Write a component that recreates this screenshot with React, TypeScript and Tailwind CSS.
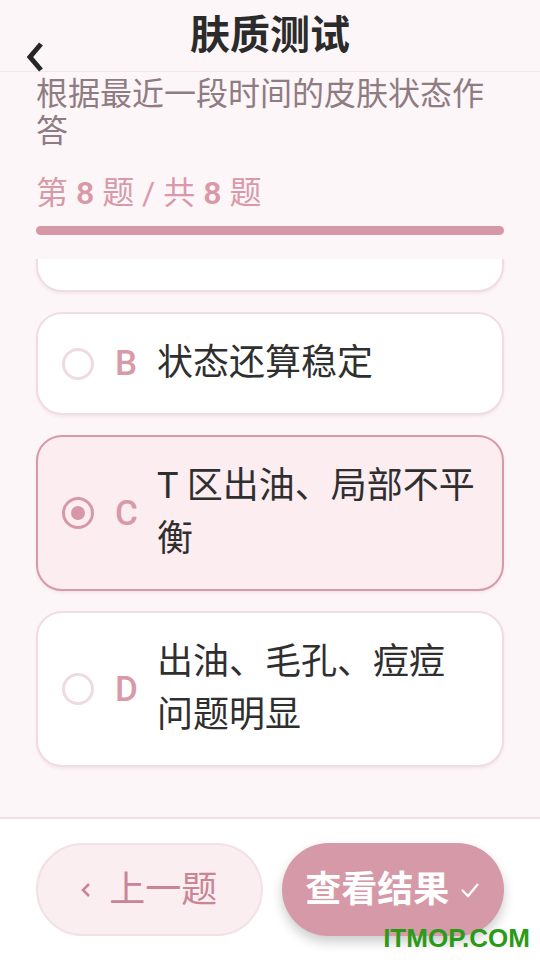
import { useState } from "react";

type Option = {
  key: string;
  text: string;
};

const options: Option[] = [
  { key: "A", text: "整体水润舒适" },
  { key: "B", text: "状态还算稳定" },
  { key: "C", text: "T 区出油、局部不平衡" },
  { key: "D", text: "出油、毛孔、痘痘问题明显" },
];

const App = () => {
  const [selected, setSelected] = useState("C");

  const showOptions = options.map((opt, i) => {
    const active = opt.key === selected;
    return (
      <div
        key={opt.key}
        onClick={() => setSelected(opt.key)}
        className={`flex shrink-0 items-center rounded-[26px] border-2 px-[24px] py-[23px] shadow-[0_2px_3px_rgba(200,150,165,0.15)] ${
          active ? "border-[#d89aa8] bg-[#fbedf0]" : "border-[#f0dde3] bg-white"
        } ${i === 0 ? "-mt-[70px]" : ""}`}
      >
        <div
          className={`flex h-8 w-8 shrink-0 items-center justify-center rounded-full border-[3px] ${
            active ? "border-[#d698a6]" : "border-[#f0dae1]"
          }`}
        >
          {active && <div className="h-[14px] w-[14px] rounded-full bg-[#d698a6]" />}
        </div>
        <span className="ml-[21px] w-[22px] shrink-0 text-[35px] leading-none font-medium text-[#d89aa8]">
          {opt.key}
        </span>
        <p className="ml-[20px] w-[321px] text-[36px] leading-[53px] text-[#2f2f2f]">
          {opt.text}
        </p>
      </div>
    );
  });

  return (
    <div className="relative flex h-[960px] w-[540px] flex-col overflow-hidden bg-[#fdf6f8] font-[Roboto,'Noto_Sans_CJK_SC',sans-serif]">
      <header className="relative flex h-[72px] shrink-0 items-center justify-center border-b border-[#f3e6eb]">
        <svg
          className="absolute left-[26px] top-[42px] h-[30px] w-[18px]"
          viewBox="0 0 18 30"
          fill="none"
        >
          <polyline
            points="15,2 4,15 15,28"
            stroke="#262626"
            strokeWidth="5"
            strokeLinejoin="miter"
          />
        </svg>
        <h1 className="text-[40px] leading-none font-bold text-[#2b2b2b]">肤质测试</h1>
      </header>

      <div className="shrink-0 px-[36px] pt-[4px]">
        <p className="text-[32px] leading-[37px] text-[#8f7c83]">
          根据最近一段时间的皮肤状态作答
        </p>
        <p className="mt-[25px] text-[32px] leading-[36px] text-[#d89aa8]">
          第 <span className="font-semibold">8</span> 题 / 共{" "}
          <span className="font-semibold">8</span> 题
        </p>
        <div className="mt-[15px] h-[9px] rounded-full bg-[#d698a6]" />
      </div>

      <div className="mt-[24px] min-h-0 flex-1 overflow-hidden px-[36px]">
        <div className="flex flex-col gap-5">{showOptions}</div>
      </div>

      <div className="flex h-[143px] shrink-0 items-center gap-[19px] border-t-2 border-[#f2dfe5] bg-white px-[36px]">
        <button
          type="button"
          className="flex h-[93px] flex-1 items-center justify-center gap-[18px] rounded-full border-2 border-[#f2e1e7] bg-[#fbeef0] text-[36px] text-[#c98596]"
        >
          <svg className="h-[16px] w-[10px]" viewBox="0 0 10 16" fill="none">
            <polyline points="8,2 2,8 8,14" stroke="#c98596" strokeWidth="2.5" />
          </svg>
          上一题
        </button>
        <button
          type="button"
          className="flex h-[93px] flex-1 items-center justify-center gap-[11px] rounded-full bg-[#d699a7] text-[36px] font-bold text-white shadow-[0_6px_12px_rgba(0,0,0,0.2)]"
        >
          查看结果
          <svg className="h-[16px] w-[20px]" viewBox="0 0 20 16" fill="none">
            <polyline points="2,8 8,14 18,2" stroke="#ffffff" strokeWidth="2.2" />
          </svg>
        </button>
      </div>

      <span className="absolute right-[10px] bottom-[9px] font-['Liberation_Sans',sans-serif] text-[26px] leading-none font-bold text-[#2b9a16]">
        ITMOP.COM
      </span>
    </div>
  );
};

export default App;
